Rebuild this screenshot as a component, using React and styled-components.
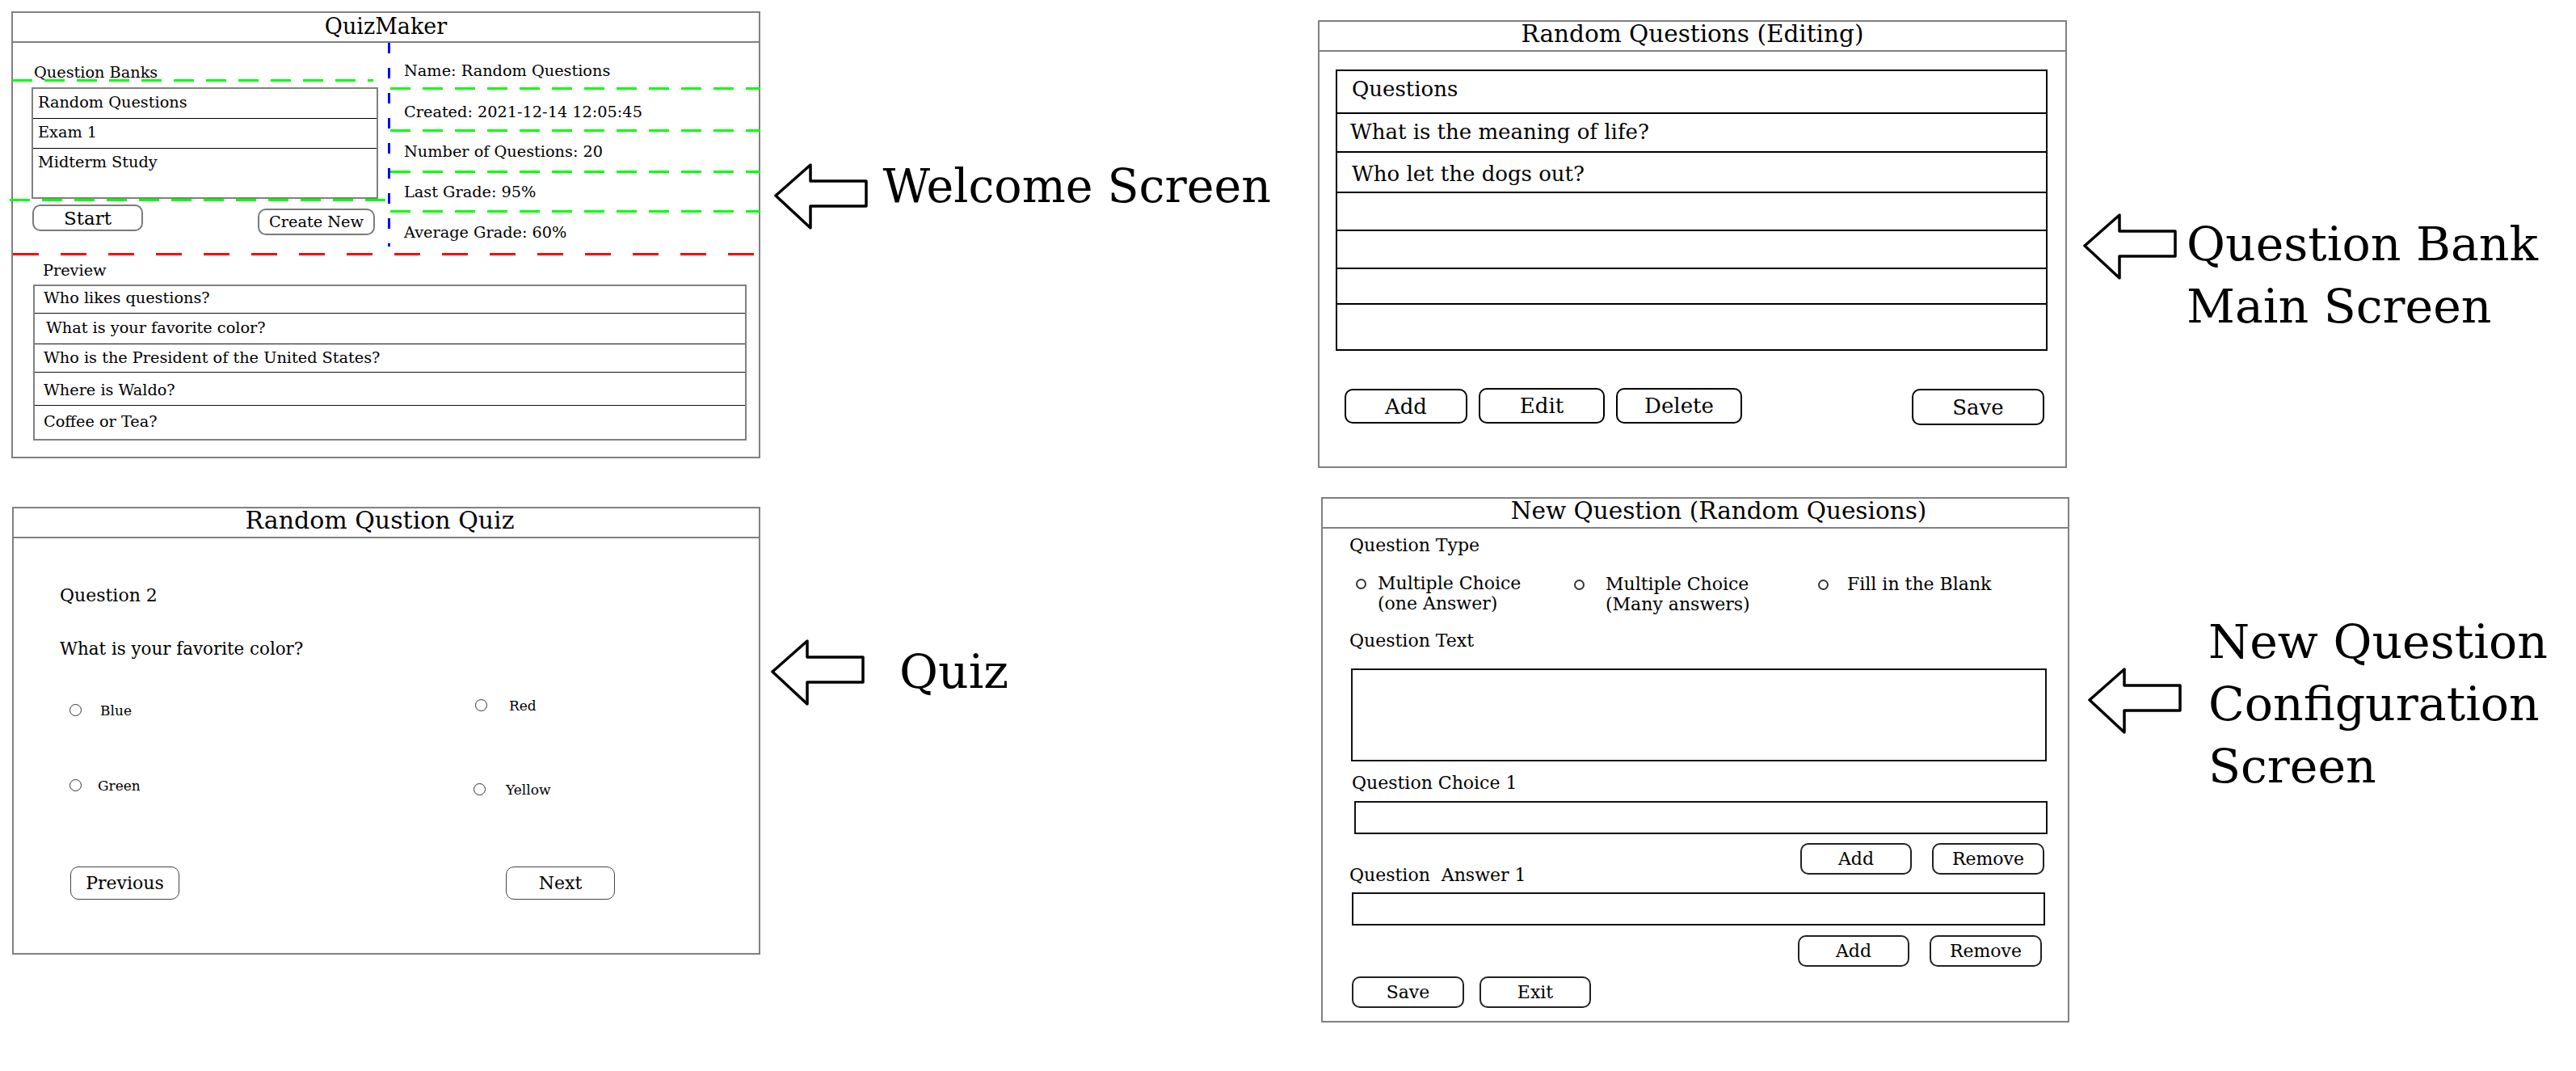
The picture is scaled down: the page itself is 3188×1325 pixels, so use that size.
import { Fragment } from "react";
import styled, { createGlobalStyle } from "styled-components";

const bankNames = ["Random Questions", "Exam 1", "Midterm Study"];

const bankInfo = [
  { text: "Name: Random Questions", h: 55, pt: 23 },
  { text: "Created: 2021-12-14 12:05:45", h: 49, pt: 16 },
  { text: "Number of Questions: 20", h: 48, pt: 13 },
  { text: "Last Grade: 95%", h: 46, pt: 12 },
  { text: "Average Grade: 60%", h: 0, pt: 13 },
];

const previewRows = [
  { text: "Who likes questions?", h: 33.3, pt: 3.2, pl: 11.3 },
  { text: "What is your favorite color?", h: 38, pt: 5.9, pl: 14.3 },
  { text: "Who is the President of the United States?", h: 35, pt: 4.3, pl: 11.3 },
  { text: "Where is Waldo?", h: 41, pt: 9.8, pl: 11.3 },
  { text: "Coffee or Tea?", h: 0, pt: 7.7, pl: 11.3 },
];

const quizChoices = [
  { label: "Blue", dy: 6, dx: 0, gap: 23 },
  { label: "Red", dy: 0, dx: 0, gap: 27 },
  { label: "Green", dy: 0, dx: 0, gap: 20 },
  { label: "Yellow", dy: 5, dx: -2, gap: 25 },
];

const tableRows = [
  { text: "Questions", h: 53, pt: 6.6, pl: 18 },
  { text: "What is the meaning of life?", h: 48, pt: 7, pl: 16 },
  { text: "Who let the dogs out?", h: 50, pt: 11, pl: 18 },
  { text: "", h: 47 },
  { text: "", h: 47 },
  { text: "", h: 44 },
  { text: "", h: 0 },
];

export default function App() {
  return (
    <>
      <GlobalStyle />
      <Page>
        <Column $w={1617} $gap={60}>
          <Row>
            <WelcomePanel />
            <Note $top={178} $left={17}>
              <Arrow dy={10} />
              <NoteText $gap={18.5} $size={57}>
                Welcome Screen
              </NoteText>
            </Note>
          </Row>
          <Row $dx={1}>
            <QuizPanel />
            <Note $top={164} $left={13}>
              <Arrow dy={0} />
              <NoteText $gap={43} $dy={2}>
                Quiz
              </NoteText>
            </Note>
          </Row>
        </Column>

        <Column $w={1557} $top={11} $gap={36}>
          <Row>
            <BankEditorPanel />
            <Note $top={238.7} $left={20}>
              <Arrow dy={0} />
              <NoteText $gap={12}>
                Question Bank
                <br />
                Main Screen
              </NoteText>
            </Note>
          </Row>
          <Row $dx={4}>
            <NewQuestionPanel />
            <Note $top={140.9} $left={23}>
              <Arrow dy={70} />
              <NoteText $gap={33}>
                New Question
                <br />
                Configuration
                <br />
                Screen
              </NoteText>
            </Note>
          </Row>
        </Column>
      </Page>
    </>
  );
}

function Arrow({ dy }) {
  return (
    <ArrowIcon $dy={dy} width="116" height="82" viewBox="0 0 116 82">
      <polygon
        points="2,40 45,2 45,22 114,22 114,53 45,53 45,80"
        fill="#fff"
        stroke="#000"
        strokeWidth="3.5"
        strokeLinejoin="round"
      />
    </ArrowIcon>
  );
}

function WelcomePanel() {
  return (
    <Panel $w={927} $h={553}>
      <Header $size={27} $pb={3}>
        QuizMaker
      </Header>
      <Split>
        <BankColumn>
          <SectionLabel $mt={25} $pl={26}>
            Question Banks
          </SectionLabel>
          <Dash $c="#00ff00" $on={25} $off={15} $w={447} $m="-4px 0 0 -1px" />
          <BankList>
            {bankNames.map((name) => (
              <BankRow key={name}>{name}</BankRow>
            ))}
          </BankList>
          <Dash $c="#00ff00" $on={25} $off={15} $w={468} $m="0 0 0 -4px" />
          <BankActions>
            <Button $w={137} $h={33} $mt={4} $size={23} $line="#7a7a7a">
              Start
            </Button>
            <Button $w={145} $h={33} $mt={9} $size={19.3} $line="#7a7a7a">
              Create New
            </Button>
          </BankActions>
        </BankColumn>
        <Divider />
        <InfoColumn>
          {bankInfo.map((row, i) => (
            <Fragment key={row.text}>
              {i > 0 && <Dash $c="#00ff00" $on={25} $off={15} $m="0 -2px 0 0" />}
              <InfoRow $h={row.h} $pt={row.pt}>
                {row.text}
              </InfoRow>
            </Fragment>
          ))}
        </InfoColumn>
      </Split>
      <Dash $c="#ff0000" $on={32} $off={27} $m="0.5px -2px 0 0" />
      <SectionLabel $mt={6.5} $pl={37}>
        Preview
      </SectionLabel>
      <PreviewList>
        {previewRows.map((row) => (
          <PreviewRow key={row.text} $h={row.h} $pt={row.pt} $pl={row.pl}>
            {row.text}
          </PreviewRow>
        ))}
      </PreviewList>
    </Panel>
  );
}

function QuizPanel() {
  return (
    <Panel $w={926} $h={554}>
      <Header $size={30} $pr={16}>
        Random Qustion Quiz
      </Header>
      <QuizBody>
        <Prompt $size={22} $mt={58.4}>
          Question 2
        </Prompt>
        <Prompt $size={21.4} $mt={39.2}>
          What is your favorite color?
        </Prompt>
        <Choices>
          {quizChoices.map((c) => (
            <Choice key={c.label} $dy={c.dy} $dx={c.dx}>
              <Radio $d={15} $bw={1} $mt={2} />
              <ChoiceLabel $gap={c.gap}>{c.label}</ChoiceLabel>
            </Choice>
          ))}
        </Choices>
        <QuizNav>
          <Button $w={135} $h={41} $size={22} $bw={1.5} $line="#444">
            Previous
          </Button>
          <Button $w={135} $h={41} $size={22} $bw={1.5} $line="#444">
            Next
          </Button>
        </QuizNav>
      </QuizBody>
    </Panel>
  );
}

function BankEditorPanel() {
  return (
    <Panel $w={927} $h={554}>
      <Header>Random Questions (Editing)</Header>
      <QuestionTable>
        {tableRows.map((row, i) => (
          <TableRow key={i} $h={row.h} $pt={row.pt} $pl={row.pl}>
            {row.text}
          </TableRow>
        ))}
      </QuestionTable>
      <EditorToolbar>
        <Button $w={152} $h={43} $mt={1} $size={26} $line="#000">
          Add
        </Button>
        <Button $w={156} $h={44} $size={26} $line="#000">
          Edit
        </Button>
        <Button $w={156} $h={44} $size={26} $line="#000">
          Delete
        </Button>
        <SaveSlot>
          <Button $w={164} $h={45} $mt={1} $size={26} $line="#000">
            Save
          </Button>
        </SaveSlot>
      </EditorToolbar>
    </Panel>
  );
}

function NewQuestionPanel() {
  return (
    <Panel $w={926} $h={650}>
      <Header $pl={58}>New Question (Random Quesions)</Header>
      <FormBody>
        <FieldLabel $mt={8.4}>Question Type</FieldLabel>
        <TypeOptions>
          <TypeOption>
            <Radio $d={13} $bw={2} $mt={7} />
            <TypeText $gap={14}>
              Multiple Choice
              <br />
              (one Answer)
            </TypeText>
          </TypeOption>
          <TypeOption>
            <Radio $d={13} $bw={2} $mt={8} />
            <TypeText $gap={26} $dy={1}>
              Multiple Choice
              <br />
              (Many answers)
            </TypeText>
          </TypeOption>
          <TypeOption>
            <Radio $d={13} $bw={2} $mt={8} />
            <TypeText $gap={23} $dy={1}>
              Fill in the Blank
            </TypeText>
          </TypeOption>
        </TypeOptions>
        <FieldLabel $mt={20.9}>Question Text</FieldLabel>
        <TextBox $h={115} $mt={20.6} $ml={2} />
        <FieldLabel $mt={14.4} $ml={3}>
          Question Choice 1
        </FieldLabel>
        <TextBox $h={41} $mt={8.6} $ml={6} $mr={-1} />
        <ActionRow $mt={11} $pr={3}>
          <Button $w={138} $h={39} $size={22} $line="#222">
            Add
          </Button>
          <Button $w={139} $h={39} $size={22} $line="#222">
            Remove
          </Button>
        </ActionRow>
        <FieldLabel $mt={-11.6}>Question&nbsp; Answer 1</FieldLabel>
        <TextBox $h={41} $mt={7.6} $ml={3} $mr={2} />
        <ActionRow $mt={12} $pr={6}>
          <Button $w={138} $h={39} $size={22} $line="#222">
            Add
          </Button>
          <Button $w={139} $h={39} $size={22} $line="#222">
            Remove
          </Button>
        </ActionRow>
        <ActionRow $mt={12} $start $gap={19} $pl={3}>
          <Button $w={139} $h={39} $size={22} $line="#222">
            Save
          </Button>
          <Button $w={138} $h={39} $size={22} $line="#222">
            Exit
          </Button>
        </ActionRow>
      </FormBody>
    </Panel>
  );
}

const GlobalStyle = createGlobalStyle`
  * {
    box-sizing: border-box;
  }
  html,
  body {
    margin: 0;
    padding: 0;
    background: #ffffff;
  }
  body {
    font-family: "DejaVu Serif", "Liberation Serif", serif;
    color: #000;
  }
`;

const Page = styled.main`
  display: flex;
  width: 3188px;
  height: 1325px;
  padding: 14px 0 0 14px;
  overflow: hidden;
`;

const Column = styled.div`
  display: flex;
  flex-direction: column;
  flex: none;
  width: ${(p) => p.$w}px;
  padding-top: ${(p) => p.$top || 0}px;
  gap: ${(p) => p.$gap}px;
`;

const Row = styled.section`
  display: flex;
  align-items: flex-start;
  margin-left: ${(p) => p.$dx || 0}px;
`;

const Note = styled.div`
  display: flex;
  align-items: flex-start;
  margin-top: ${(p) => p.$top}px;
  margin-left: ${(p) => p.$left}px;
`;

const ArrowIcon = styled.svg`
  flex: none;
  display: block;
  margin-top: ${(p) => p.$dy || 0}px;
`;

const NoteText = styled.div`
  margin-top: ${(p) => p.$dy || 0}px;
  margin-left: ${(p) => p.$gap}px;
  font-size: ${(p) => p.$size || 58.5}px;
  line-height: 77px;
  white-space: nowrap;
`;

const Panel = styled.div`
  display: flex;
  flex-direction: column;
  flex: none;
  width: ${(p) => p.$w}px;
  height: ${(p) => p.$h}px;
  border: 2px solid #808080;
  background: #fff;
`;

const Header = styled.div`
  flex: none;
  height: 37px;
  display: flex;
  align-items: center;
  justify-content: center;
  border-bottom: 2px solid #808080;
  font-size: ${(p) => p.$size || 29.5}px;
  padding: 0 ${(p) => p.$pr || 0}px ${(p) => p.$pb ?? 6}px ${(p) => p.$pl || 0}px;
  white-space: nowrap;
`;

const Dash = styled.div`
  flex: none;
  height: 3px;
  width: ${(p) => (p.$w ? `${p.$w}px` : "auto")};
  margin: ${(p) => p.$m || "0"};
  background: repeating-linear-gradient(
    to right,
    ${(p) => p.$c} 0 ${(p) => p.$on}px,
    transparent ${(p) => p.$on}px ${(p) => p.$on + p.$off}px
  );
`;

const Divider = styled.div`
  width: 3px;
  height: 252px;
  background: repeating-linear-gradient(
    to bottom,
    #0000ff 0 13px,
    transparent 13px 31px
  );
`;

const Split = styled.div`
  flex: none;
  display: grid;
  grid-template-columns: 464px 3px 1fr;
  height: 259.5px;
`;

const BankColumn = styled.div`
  display: flex;
  flex-direction: column;
`;

const SectionLabel = styled.div`
  font-size: 19.3px;
  line-height: 24px;
  margin-top: ${(p) => p.$mt || 0}px;
  padding-left: ${(p) => p.$pl || 0}px;
  white-space: nowrap;
`;

const BankList = styled.div`
  display: flex;
  flex-direction: column;
  width: 429px;
  height: 138px;
  margin: 7px 0 0 23px;
  border: 2px solid #808080;
`;

const BankRow = styled.div`
  height: 37px;
  padding: 5px 0 0 6px;
  font-size: 19.3px;
  line-height: 24px;
  border-bottom: 1px solid #000;

  &:last-child {
    flex: 1;
    border-bottom: none;
  }
`;

const BankActions = styled.div`
  display: flex;
  align-items: flex-start;
  justify-content: space-between;
  padding: 0 16px 0 24px;
`;

const Button = styled.button`
  flex: none;
  display: flex;
  align-items: center;
  justify-content: center;
  width: ${(p) => p.$w}px;
  height: ${(p) => p.$h}px;
  margin-top: ${(p) => p.$mt || 0}px;
  padding: 0;
  background: #fff;
  color: #000;
  border: ${(p) => p.$bw || 2}px solid ${(p) => p.$line};
  border-radius: 10px;
  font-family: "DejaVu Serif", "Liberation Serif", serif;
  font-size: ${(p) => p.$size}px;
  white-space: nowrap;
`;

const InfoColumn = styled.div`
  display: flex;
  flex-direction: column;
`;

const InfoRow = styled.div`
  flex: ${(p) => (p.$h ? "none" : "1")};
  height: ${(p) => (p.$h ? `${p.$h}px` : "auto")};
  padding: ${(p) => p.$pt}px 0 0 17px;
  font-size: 19.3px;
  line-height: 24px;
  white-space: nowrap;
`;

const PreviewList = styled.div`
  display: flex;
  flex-direction: column;
  width: 883px;
  height: 193.3px;
  margin: 5.7px 0 0 24.7px;
  border: 2px solid #808080;
`;

const PreviewRow = styled.div`
  flex: ${(p) => (p.$h ? "none" : "1")};
  height: ${(p) => (p.$h ? `${p.$h}px` : "auto")};
  padding: ${(p) => p.$pt}px 0 0 ${(p) => p.$pl}px;
  font-size: 19.3px;
  line-height: 24px;
  white-space: nowrap;

  & + & {
    border-top: 1px solid #111;
  }
`;

const QuizBody = styled.div`
  display: flex;
  flex-direction: column;
  padding-left: 57px;
`;

const Prompt = styled.div`
  font-size: ${(p) => p.$size}px;
  line-height: 26px;
  margin-top: ${(p) => p.$mt}px;
  white-space: nowrap;
`;

const Choices = styled.div`
  display: grid;
  grid-template-columns: 502px auto;
  row-gap: 73px;
  align-items: start;
  margin: 47.4px 0 0 12px;
`;

const Choice = styled.div`
  display: flex;
  align-items: flex-start;
  margin-top: ${(p) => p.$dy}px;
  margin-left: ${(p) => p.$dx}px;
`;

const Radio = styled.span`
  flex: none;
  display: block;
  width: ${(p) => p.$d}px;
  height: ${(p) => p.$d}px;
  margin-top: ${(p) => p.$mt}px;
  border: ${(p) => p.$bw}px solid #333;
  border-radius: 50%;
`;

const ChoiceLabel = styled.span`
  margin-left: ${(p) => p.$gap}px;
  font-size: 17px;
  line-height: 20px;
`;

const QuizNav = styled.div`
  display: flex;
  gap: 404px;
  margin-top: 85px;
  padding-left: 13px;
`;

const QuestionTable = styled.div`
  display: flex;
  flex-direction: column;
  width: 881px;
  height: 348px;
  margin: 22px 0 0 20px;
  border: 2px solid #000;
`;

const TableRow = styled.div`
  flex: ${(p) => (p.$h ? "none" : "1")};
  height: ${(p) => (p.$h ? `${p.$h}px` : "auto")};
  padding: ${(p) => p.$pt || 0}px 0 0 ${(p) => p.$pl || 0}px;
  font-size: 26px;
  line-height: 30px;
  white-space: nowrap;
  border-bottom: 2px solid #000;

  &:last-child {
    border-bottom: none;
  }
`;

const EditorToolbar = styled.div`
  display: flex;
  align-items: flex-start;
  gap: 14px;
  margin-top: 46px;
  padding: 0 26px 0 31px;
`;

const SaveSlot = styled.div`
  margin-left: auto;
`;

const FormBody = styled.div`
  display: flex;
  flex-direction: column;
  padding: 0 26px 0 33px;
`;

const FieldLabel = styled.div`
  font-size: 22px;
  line-height: 26px;
  margin-top: ${(p) => p.$mt || 0}px;
  margin-left: ${(p) => p.$ml || 0}px;
  white-space: nowrap;
`;

const TypeOptions = styled.div`
  display: grid;
  grid-template-columns: 270px 302px auto;
  margin: 21.1px 0 0 8px;
  height: 50px;
`;

const TypeOption = styled.div`
  display: flex;
  align-items: flex-start;
`;

const TypeText = styled.div`
  margin-left: ${(p) => p.$gap}px;
  margin-top: ${(p) => p.$dy || 0}px;
  font-size: 22px;
  line-height: 25px;
  white-space: nowrap;
`;

const TextBox = styled.div`
  flex: none;
  height: ${(p) => p.$h}px;
  margin: ${(p) => p.$mt}px ${(p) => p.$mr || 0}px 0 ${(p) => p.$ml || 0}px;
  border: 2px solid #111;
  background: #fff;
`;

const ActionRow = styled.div`
  display: flex;
  justify-content: ${(p) => (p.$start ? "flex-start" : "flex-end")};
  gap: ${(p) => p.$gap || 25}px;
  margin-top: ${(p) => p.$mt}px;
  padding: 0 ${(p) => p.$pr || 0}px 0 ${(p) => p.$pl || 0}px;
`;
